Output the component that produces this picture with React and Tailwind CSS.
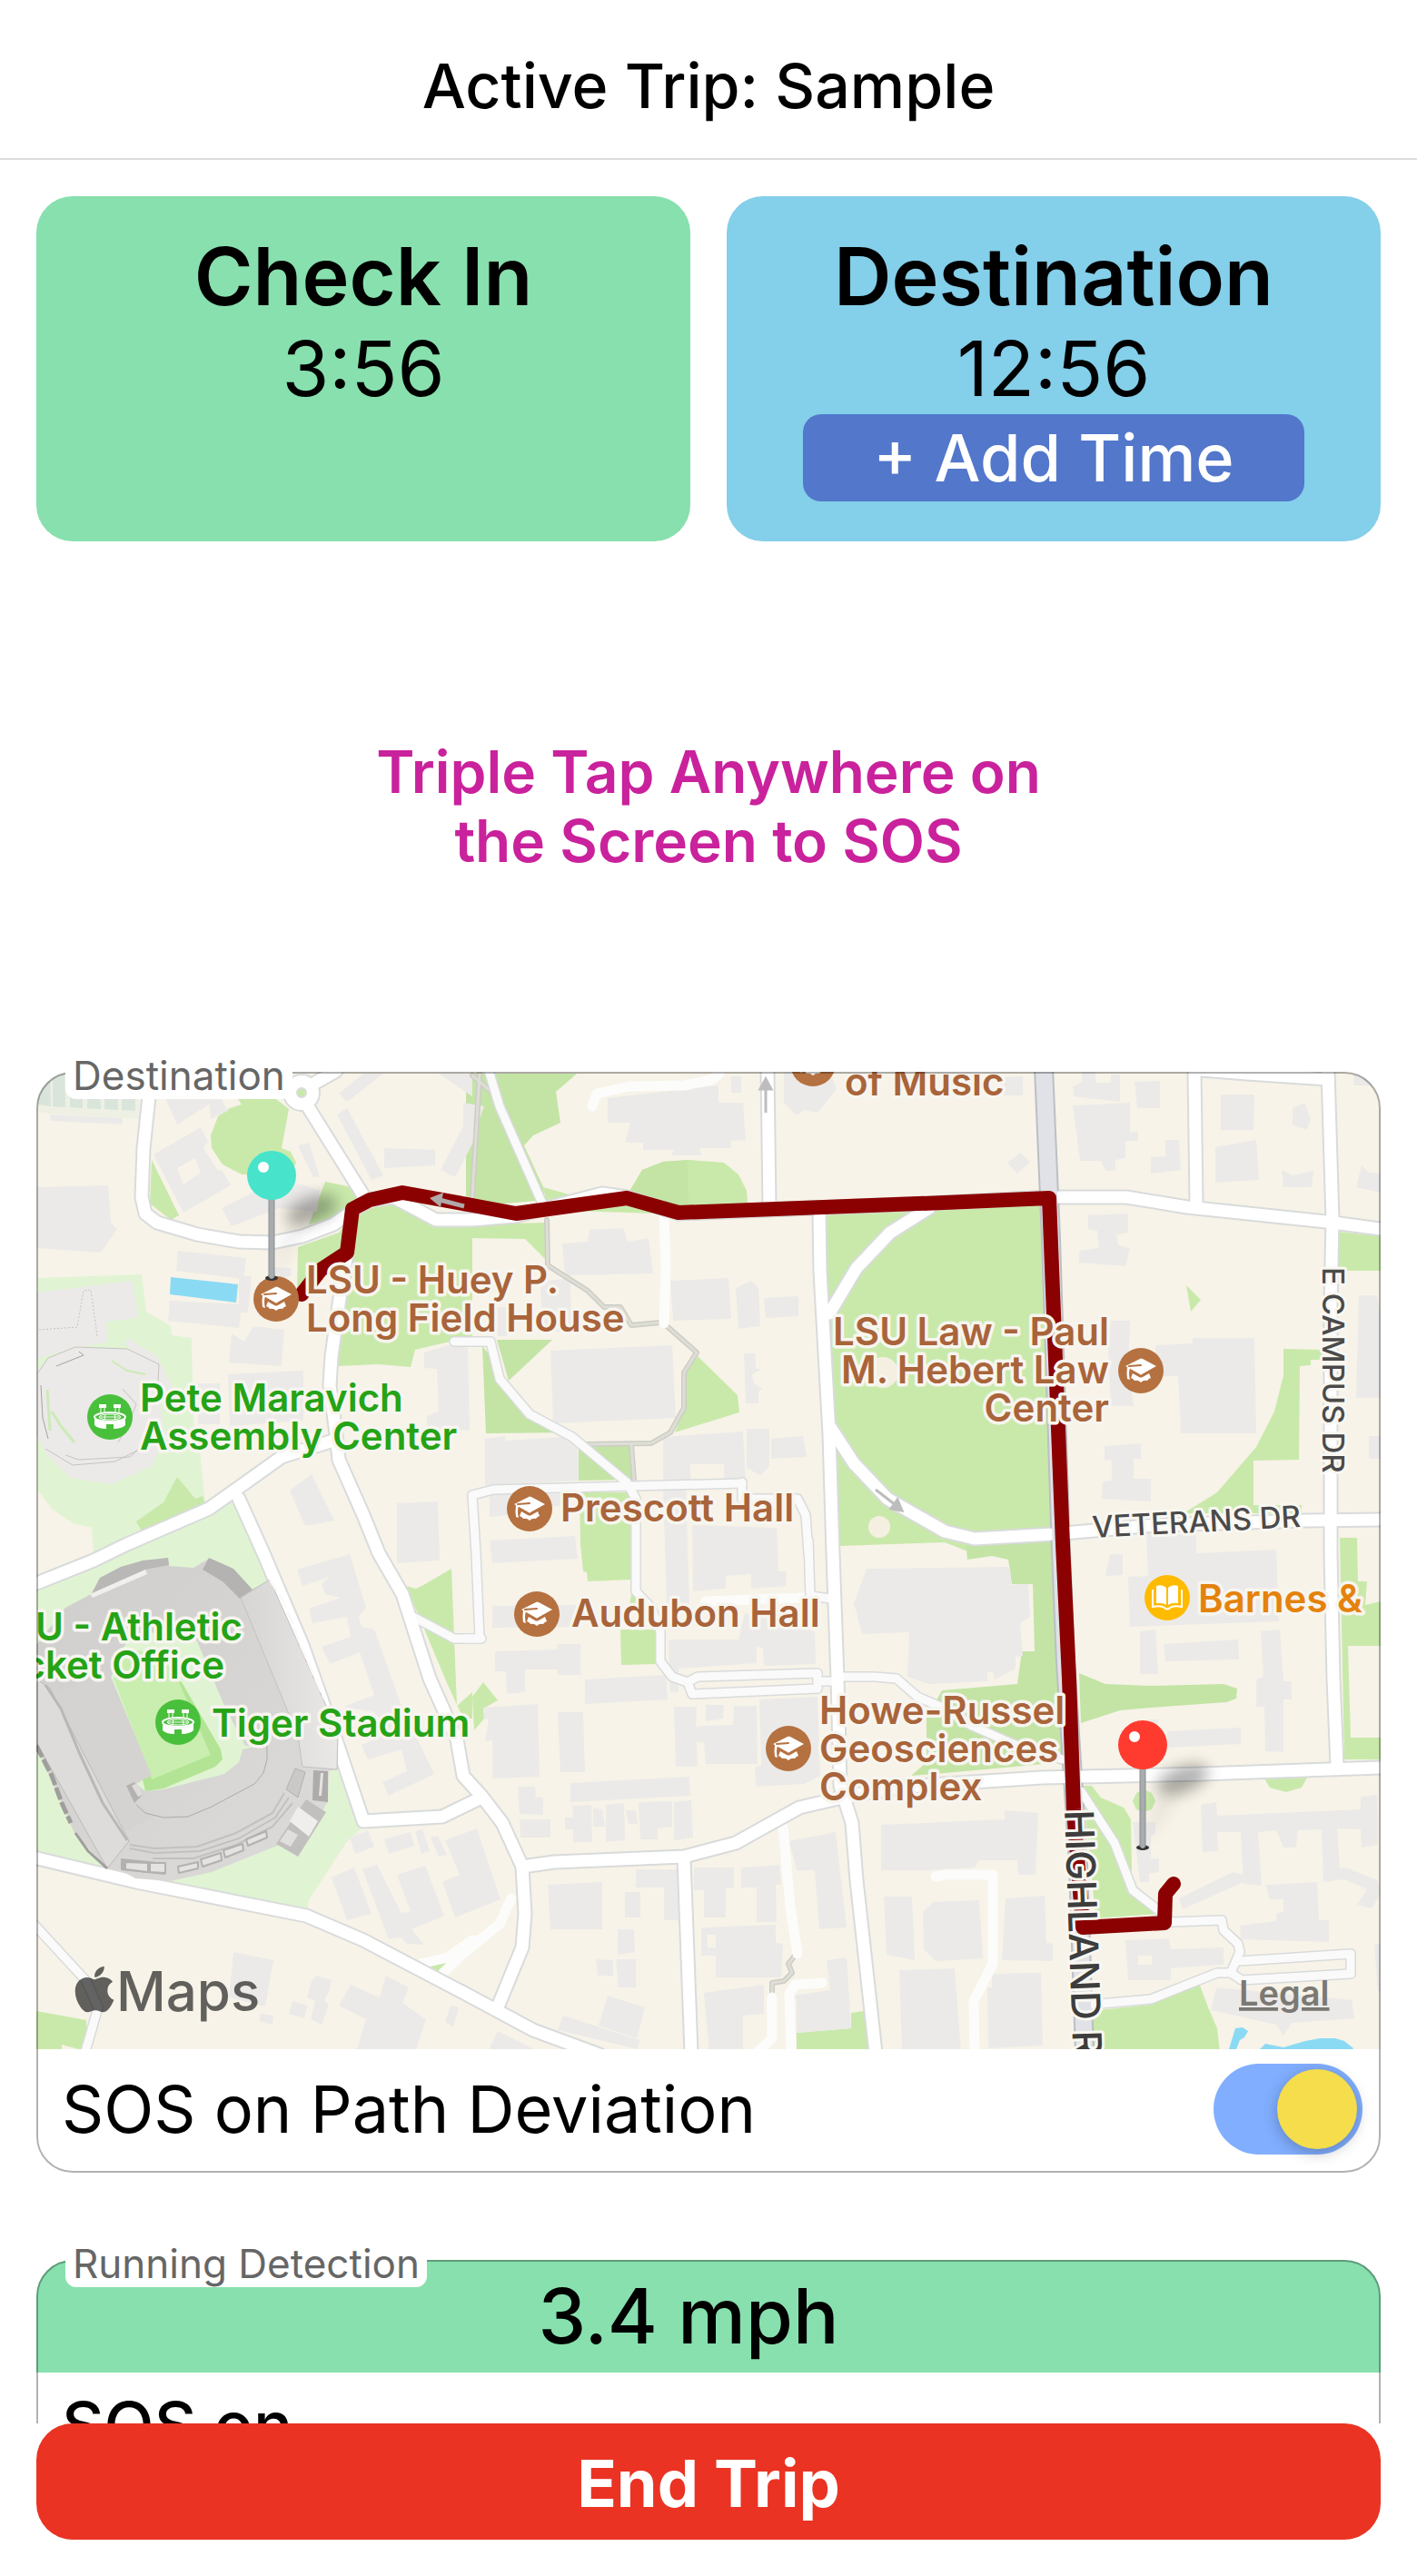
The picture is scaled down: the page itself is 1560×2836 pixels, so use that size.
import React from "react";
import { FaApple } from "react-icons/fa";

/* ---------- map geometry ---------- */

// Survey sheets: each has an origin on the map and its own scale.
const sheet = (ox, oy, sx, sy) => (s) =>
  s.split(" ").map((p) => {
    const [x, y] = p.split(",").map(Number);
    return Math.round(ox + x / sx) + "," + Math.round(oy + y / sy);
  }).join(" ");

const A = sheet(0, 1150, 3, 2.8);
const B = sheet(520, 1150, 3, 2.8);
const C = sheet(1040, 1150, 3, 2.8);
const D = sheet(0, 1700, 3, 2.7034);
const E = sheet(520, 1700, 3, 2.7034);
const F = sheet(1040, 1700, 3, 2.7034);
const join = (...parts) => parts.join(" ");

const paleGreens = [
  A("126,720 468,708 482,822 564,868 566,897 632,905 638,1170 655,1200 678,1418 450,1500 310,1568 302,1490 240,1475 170,1430 126,1375"),
  D("120,110 560,-50 780,-140 850,-10 1190,850 1150,880 1020,1060 1015,1095 120,940"),
];

const greens = [
  A("780,160 900,160 955,200 930,320 960,330 978,365 960,400 797,400 735,370 700,320 695,280 720,220 760,195 797,185"),
  A("500,355 592,525 565,540 495,490"),
  A("1075,422 1150,437 1200,480 1120,530 1020,555"),
  A("985,625 1120,580 1180,510 1330,490 1440,560 1560,560 1560,900 1370,940 1357,993 1250,985 1115,990 1160,680 1000,740 980,770"),
  A("585,1332 645,1400 670,1392 678,1418 468,1500 450,1470 540,1410"),
  B("235,440 330,465 520,450 560,385 630,360 720,355 830,365 880,400 905,450 908,490 600,520 250,510"),
  B("-20,555 250,550 245,665 175,600 -20,597"),
  B("745,960 875,1080 883,1135 670,1195 700,1120 700,1010"),
  join(B("355,1380 530,1380"), E("525,105 380,110 378,85 365,80 357,0")),
  join(B("1165,520 1500,512"), C("320,495 358,1520 70,1560 0,1535"), B("1215,1545 1190,1200")),
  C("1300,578 1440,592 1440,697 1300,697"),
  C("797,743 847,787 813,823"),
  C("1118,938 1250,940 1250,972 1210,972 1210,988 1172,990 1170,1280 1020,1282 1020,1420 1180,1420 1180,1445 790,1445 900,1380 1030,1240 1090,1130 1118,1020"),
  F("1305,-20 1362,-20 1366,110 1395,110 1390,180 1440,170 1440,303 1333,303 1340,577 1440,575 1440,640 1320,640"),
  F("455,720 485,718 515,755 590,785 615,820 617,970 600,1000 705,1100 500,1115 495,1080"),
  F("480,1390 680,1370 840,1305 870,1380 900,1440 908,1510 490,1510"),
  F("1057,697 1197,695 1180,725 1128,738 1075,725"),
  F("622,765 633,740 658,730 683,740 697,765 683,790 658,798 633,790"),
  E("0,455 37,410 83,465 37,488 40,520 5,555"),
  E("490,255 605,255 607,357 492,360"),
  E("525,150 545,150 590,200 520,180"),
  E("1072,1455 1252,1440 1252,1395 1293,1390 1312,1510 1072,1510"),
  D("1340,125 1375,133 1405,120 1492,72 1510,480 1560,440 1560,520 1530,520 1480,420"),
  D("120,1390 285,1417 290,1510 204,1490 204,1510 120,1510"),
  D("1370,1252 1480,1245 1450,1280"),
];

const deepGreens = [
  B("-20,90 345,90 275,145 290,240 200,280 170,310 235,440 240,480 -20,500"),
  B("80,910 265,910 120,1035"),
  B("33,930 60,960 100,1040 190,1130 330,1195 45,1197"),
  B("350,1240 525,1235 525,1350 500,1340 350,1345"),
  B("520,455 560,385 630,360 710,355 715,490 600,510"),
  F("70,-20 360,-20 392,650 0,680 -110,690 -60,650 -60,520 -10,435 240,415 255,320 298,318 292,120 222,120 210,45 155,35 75,45"),
  F("445,385 530,415 680,423 920,415 965,430 962,460 930,470 680,487 580,495 450,533"),
];

const waters = [
  A("564,716 786,740 780,795 560,770"),
  F("960,1440 985,1437 1003,1450 990,1468 975,1475 960,1510 935,1510"),
  F("1040,1503 1060,1487 1120,1497 1190,1480 1240,1471 1290,1470 1320,1480 1350,1500 1340,1510 1040,1510"),
];

const buildings = [
  A("545,165 690,165 690,185 585,245"), A("690,165 730,165 752,205 697,230"),
  A("508,340 662,255 688,300 672,320 720,390 732,385 762,433 605,517"),
  A("732,505 870,440 1000,430 1055,450 1048,515 920,505 765,560"),
  A("120,440 357,433 367,550 388,568 333,640 120,628"),
  A("588,636 813,657 805,722 582,697"), A("560,790 798,800 790,873 556,850"),
  A("765,890 808,915 838,868 940,880 930,990 755,980"),
  A("752,1015 1003,1005 1003,1160 760,1175"), A("655,1045 725,1045 725,1170 655,1170"),
  A("958,1375 1030,1325 1103,1468 1008,1485"), A("1311,1415 1445,1408 1452,1590 1311,1590"),
  A("983,310 1020,303 1055,410 1035,408"), A("1113,215 1147,195 1267,402 1228,417"),
  A("1270,318 1438,325 1438,372 1270,380"), A("1580,160 1580,270 1502,408 1455,385"),
  A("1120,150 1200,90 1265,90 1147,177"), A("1450,90 1560,90 1560,160"),
  A("165,215 406,228 405,247 168,235"), A("900,685 962,688 960,715 900,730"),
  A("790,710 832,715 820,825 790,825"),
  A("120,765 437,727 457,842 350,855 357,918 250,932 120,970"),
  A("120,1010 160,965 260,930 430,940 520,980 530,1130 545,1210 500,1300 370,1355 230,1335 150,1260 120,1200"),
  A("420,905 520,960 575,1070 540,1090 480,980 415,925"),
  A("1402,950 1480,927 1545,935 1552,1190 1410,1180 1410,1145 1448,1130 1442,1000 1402,998"),
  B("448,165 812,125 812,178 895,178 903,295 855,298 855,318 750,318 755,342 657,342 665,325 565,325 565,302 505,302 522,240 448,240"),
  B("855,98 888,98 888,147 855,147"), B("1028,85 1180,85 1203,138 1140,210 1095,202 1070,217 1028,178"),
  B("298,612 382,608 388,572 498,565 513,608 583,595 597,705 305,710"),
  B("655,728 845,720 855,845 663,852"), B("870,750 920,727 945,750 952,868 880,875"),
  B("963,780 1078,775 1078,836 970,842"), B("257,943 660,928 672,1150 267,1168"),
  B("897,952 937,952 937,1000 958,1000 925,1015 930,1045 958,1060 945,1070 945,1105 903,1105"),
  B("905,1183 980,1183 980,1300 950,1328 905,1305"), B("988,1215 1093,1207 1103,1270 988,1276"),
  B("630,1210 895,1193 903,1345 830,1345 830,1293 720,1293 720,1345 630,1345"),
  B("42,1215 108,1208 110,1222 348,1208 350,1345 42,1358"), B("57,1385 300,1385 300,1420 115,1450 57,1455"),
  B("-30,180 38,190 0,290 -30,310"), B("225,730 325,720 328,890 232,880"), B("85,810 115,810 115,900 85,900"),
  join(B("57,1530 340,1515"), E("348,43 65,57")),
  join(B("630,1370 705,1365"), E("717,180 642,180")),
  join(B("725,1480 1005,1490"), E("1012,80 1037,82 1035,125 920,133 920,90 838,95 838,133 730,140")),
  C("422,130 453,115 453,85 498,85 498,117 550,117 550,92 580,92 580,177 425,160"),
  C("628,115 712,113 712,195 637,195"),
  C("422,187 612,178 612,270 638,270 638,296 598,296 598,350 563,355 563,388 530,388 515,357 447,357"),
  C("728,293 773,293 780,387 680,397 680,348 728,345"), C("912,153 1022,153 1020,264 912,264"),
  C("895,317 1030,295 1038,418 895,426"), C("1150,195 1187,178 1210,230 1193,263 1150,245"),
  C("1112,387 1150,403 1218,388 1213,440 1120,440"), C("1377,372 1400,395 1440,397 1440,455 1360,440"),
  C("1350,92 1440,92 1440,125 1350,125"), C("207,365 250,333 282,362 240,397"), C("195,100 257,98 257,158 195,158"),
  C("473,527 605,520 607,580 568,585 572,620 612,628 598,682 443,673 445,635 510,627 505,573 473,567"),
  C("550,850 613,850 607,1000 623,1113 548,1113 540,950"),
  C("697,928 820,920 820,905 1022,905 1030,1197 780,1197 772,1023 697,1023"),
  C("528,1238 648,1230 648,1276 623,1276 623,1338 680,1338 680,1407 520,1400 523,1347 553,1345 553,1282 528,1280"),
  C("1367,773 1427,773 1440,830 1440,1090 1360,1088"), C("1400,1207 1440,1207 1440,1276 1400,1276"),
  F("665,-35 830,-28 832,27 1095,15 1103,230 613,245 605,97 672,95"),
  F("-258,73 215,67 220,122 277,118 282,215 250,235 257,333 233,335 233,370 165,403 160,378 142,380 140,408 -50,415 -123,395 -117,262 -273,268 -300,175"),
  F("545,30 588,30 588,92 530,95"), F("645,260 697,255 705,387 645,387"), F("722,297 970,283 972,342 730,348"),
  F("1045,260 1107,255 1120,407 1147,407 1145,462 1118,462 1120,618 1060,617 1055,485 1028,483 1028,403 1052,395"),
  F("735,558 978,545 978,595 735,605"), F("675,522 705,522 705,550 675,550"),
  F("622,828 697,828 697,862 680,870 680,935 707,935 707,975 675,980 675,1005 645,1005"),
  F("845,775 897,768 900,808 1375,790 1375,752 1427,745 1430,895 1378,902 1375,850 1297,845 1305,965 1325,962 1427,1000 1440,1040 1410,1085 1363,1072 1395,1028 1320,997 1252,1005 1245,850 1168,852 1160,902 1120,902 1095,852 1035,858 1047,1017 987,1010 978,857 900,857 902,915 852,917"),
  F("773,1055 950,977 990,983 987,1005 787,1087"),
  F("1062,1015 1230,1007 1235,1118 1270,1120 1268,1185 978,1175 975,1135 1095,1122 1095,1097 1120,1095 1118,1057 1070,1057"),
  F("597,1180 740,1172 748,1207 922,1200 920,1253 748,1262 747,1298 605,1298"),
  F("897,1320 1345,1357 1352,1410 1145,1425 1120,1462 1095,1430 880,1387"),
  F("-210,835 198,820 198,793 308,800 300,985 242,985 240,940 115,940 100,962 -60,970 -210,970"),
  F("200,1053 330,1045 335,1187 357,1190 357,1240 190,1238"), F("-73,1095 -35,1065 115,1060 125,1233 -30,1240 -70,1205"),
  F("-150,1268 33,1262 55,1510 -142,1510"), F("157,1280 317,1277 323,1492 145,1500 142,1320 157,1318"),
  F("1420,1193 1440,1190 1440,1330 1430,1330"),
  E("67,185 345,180 345,245 67,250"),
  E("75,320 280,313 282,297 357,297 357,388 282,388 282,372 173,372 173,440 115,445 110,378 75,378"),
  E("373,403 640,388 645,462 373,475"),
  E("648,285 880,283 900,205 1130,260 1135,357 963,363 960,310 940,302 938,355 682,370 680,440 655,440"),
  E("35,487 215,477 223,692 65,698 65,585 42,587 55,522 40,520"), E("282,500 367,500 373,678 290,678"),
  E("665,483 740,483 738,543 768,540 862,537 865,480 938,480 943,655 770,655 765,588 742,590 743,662 672,663"),
  E("772,478 830,478 828,520 772,527"), E("947,462 1140,455 1150,690 1095,713 937,722 933,663 955,660"),
  E("325,710 717,693 720,750 325,767"), E("150,723 208,723 210,753 233,753 233,805 157,803"),
  E("157,820 257,820 257,873 160,873"), E("307,815 332,815 330,778 392,777 397,887 333,887 332,850 307,848"),
  E("398,785 430,790 437,840 400,840"), E("440,775 500,770 505,880 440,887"), E("508,792 540,792 547,833 515,833"),
  E("550,767 660,765 660,840 612,845 612,878 555,878"), E("665,767 722,763 728,873 665,880"),
  E("540,968 680,968 680,1118 632,1118 632,1022 540,1022"),
  E("732,962 863,962 863,1022 838,1025 838,1110 765,1110 765,1030 732,1030"),
  E("888,962 1015,955 1020,1013 1003,1015 1005,1125 938,1125 938,1023 888,1023"),
  E("250,1013 430,1007 430,1147 257,1147"), E("505,1035 555,1035 555,1110 505,1110"),
  E("480,1147 533,1147 537,1215 480,1222"), E("408,1235 465,1237 465,1283 415,1283"),
  E("473,1235 540,1235 540,1320 482,1320"),
  E("757,1140 1003,1133 1003,1187 1027,1190 1020,1290 805,1290 805,1225 757,1225"),
  E("1047,885 1200,858 1235,1140 1145,1147 1130,970 1070,970"),
  E("1170,1237 1235,1230 1252,1440 1072,1455 1072,1355 1057,1343 1183,1328"),
  E("765,1335 963,1312 963,1397 895,1403 895,1510 782,1510"),
  E("447,1343 570,1380 543,1470 417,1433"), E("300,1402 553,1475 545,1503 283,1445"), E("83,1450 220,1510 50,1510"),
  D("1470,880 1575,845 1652,1057 1503,1110 1460,1005 1517,985"),
  E("1360,1050 1452,1050 1460,1238 1367,1222"),
  D("980,75 1155,30 1210,190 1185,215 1193,245 1237,253 1325,480 1433,685 1285,750 1262,708 1345,675 1325,612 1215,640 1195,597 1290,560 1235,500 1135,485 1235,448 1187,322 1088,357 1063,305 1158,277 1145,217 1033,235 1020,193 1125,160 1075,150 1063,118 1090,98 1000,125"),
  D("1155,872 1215,852 1237,900 1172,922"), D("1270,878 1355,858 1367,897 1283,923"),
  D("1370,855 1395,848 1418,913 1393,922"), D("1422,873 1447,868 1475,925 1450,930"),
  D("1095,993 1170,963 1227,1100 1145,1118"),
  D("1197,968 1245,955 1327,1097 1355,1092 1312,985 1403,958 1468,1105 1360,1147 1400,1192 1345,1190 1325,1170 1285,1177"),
  D("770,1215 903,1237 875,1375 755,1350"),
  D("1045,1283 1095,1297 1085,1330 1070,1357 1087,1370 1063,1430 1025,1415 1040,1360 1015,1350 1030,1300"),
  D("967,1360 1018,1373 1005,1412 953,1397"), D("862,1397 903,1402 900,1430 855,1420"),
  D("1157,1312 1253,1350 1275,1285 1350,1318 1330,1365 1407,1415 1370,1510 1175,1510 1210,1415 1120,1372"),
  D("1487,1372 1515,1380 1497,1437 1470,1422"), D("1311,-30 1450,-30 1453,50 1311,57"),
];

const courtyards = [
  A("585,380 645,350 662,395 605,430"),
  E("773,1163 803,1163 803,1200 778,1200"),
  F("638,1225 683,1225 683,1253 638,1253"),
];

const footpaths = [
  A("1560,470 1585,90"), B("0,95 70,150"),
  B("245,540 250,680 380,760 435,810 490,810 525,865 620,858"),
  B("640,865 740,950 698,1010 700,1120 655,1195 590,1228 375,1232"),
  B("525,1235 533,1345"),
  E("1065,1225 1045,1250 1055,1275 1030,1300 990,1305 990,1345"),
];

const lanes = [
  B("395,190 410,150 520,130 700,125 790,110 815,90"), B("633,530 640,680 632,860"),
  E("1025,840 1050,1080 1075,1220"), E("990,1350 990,1470 940,1515"),
  E("1155,1305 1065,1310 1048,1340 1052,1510"), D("1530,1220 1650,1130 1688,1055"),
  E("770,170 1100,160"), F("-30,990 0,985 160,985 160,1250 95,1360 100,1510"),
  D("1390,1250 1480,1230 1560,1180"), D("1460,1280 1575,1180"),
];

const minorRoads = [
  B("50,70 90,190 230,490"),
  join(B("-60,915 60,915 90,1030 190,1140 330,1210 510,1350 540,1400 540,1568"), E("540,140 590,190 620,260 622,350 660,395 710,412 745,395 1140,385 1140,430 725,445 710,412")),
  B("890,1350 890,1400 1075,1400 1100,1450 1110,1568"),
  join(B("890,1352 70,1372 0,1390 12,1568"), E("25,280 -30,280")),
  E("1110,-10 1115,155 1185,162"), E("1140,408 1200,408"),
  D("110,1130 285,1300 325,1380 280,1520"), D("1365,215 1500,282 1590,282"),
  join(E("1205,395 1330,395 1400,400 1470,455 1560,490"), F("90,540 240,600 390,640")),
  F("450,735 490,790 560,890 620,1030 705,1090 750,1125 915,1118 920,1150 970,1190 975,1215 945,1275 900,1275 830,1300 680,1355 480,1370"),
  F("975,1240 1340,1220 1340,1280 980,1297 945,1275"),
];

const roads = [
  join(A("500,80 475,320 468,470 480,520 520,550 650,585 790,608 900,610 1000,590 1100,555 1170,510 1220,480 1300,470 1440,540"), B("0,540 140,530 430,460 510,470 680,520 1500,490"), C("350,470 600,470 800,500 1260,545 1440,568")),
  A("990,150 1210,480"), A("1110,80 1000,140"),
  join(A("1145,640 1120,800 1095,960 1090,1050 1110,1200 1120,1280 1200,1450 1250,1568"), D("1330,150 1420,400 1510,580 1530,690 1590,750"), E("100,830 165,960 175,1100 165,1200 80,1385")),
  join(D("100,125 310,50"), A("420,1540 690,1430 930,1270 1100,1220")),
  join(A("790,1400 870,1568"), D("1000,300 1100,560 1200,825 1460,810 1590,755")),
  join(D("100,930 450,1005 1010,1105 1200,1180 1560,1350"), E("200,1445 420,1520")),
  B("975,80 982,500"),
  join(B("1147,520 1150,700 1180,1200 1190,1568"), E("1205,400 1215,720 1255,830 1270,1000 1332,1515")),
  B("1510,505 1380,580 1270,690 1180,830"),
  join(B("1182,1180 1260,1290 1370,1400 1560,1500"), C("100,1522 360,1510 700,1480 1200,1468 1440,1465")),
  C("825,80 832,490"), C("850,78 1000,90 1265,105"),
  join(C("1265,80 1280,540 1275,800 1275,1568"), F("1285,400 1297,660")),
  join(E("165,960 270,945 700,930 870,890 1080,785 1220,755 1400,725"), F("0,715 320,695 850,685 1270,670 1440,665")),
  E("700,935 722,1515"),
];

const highland = join(C("327,70 350,600 385,1568"), F("400,350 440,950 462,1515"));
const route = join(
  A("995,770 1060,695 1145,640 1165,508 1220,478 1330,457"), B("0,495 145,520 510,473 680,517"),
  C("0,488 345,473"), F("390,0 410,400 425,790 455,1142 727,1127 730,1040 757,1010"),
);

const Fill = ({ items, color }) => items.map((p, i) => <polygon key={i} points={p} fill={color} />);
const Line = ({ items, color, w }) => items.map((p, i) => (
  <polyline key={i} points={p} fill="none" stroke={color} strokeWidth={w} strokeLinejoin="round" strokeLinecap="round" />
));

function Stadium() {
  return (
    <g strokeLinejoin="round">
      <defs>
        <linearGradient id="bowl" x1="0" y1="0" x2="1" y2="1">
          <stop offset="0" stopColor="#cfcecc" /><stop offset="1" stopColor="#dcdbd9" />
        </linearGradient>
        <linearGradient id="stand" x1="0" y1="0" x2="1" y2="0">
          <stop offset="0" stopColor="#d6d5d3" /><stop offset="1" stopColor="#e9e8e6" />
        </linearGradient>
      </defs>
      <polygon points={D("330,100 470,55 555,40 558,65 640,70 690,42 770,75 830,135 890,105 1115,560 1115,670 1085,675 1083,768 1060,800 985,900 915,897 700,975 560,1003 447,995 398,970 350,965 247,860 120,600 120,300 215,190 300,150")} fill="url(#bowl)" />
      <polygon points={D("330,100 400,68 470,48 555,40 558,63 480,75 300,155")} fill="#b9b8b6" />
      <polygon points={D("298,150 480,75 485,88 305,160")} fill="#f0efed" />
      <polygon points={D("690,40 770,72 833,135 793,162 735,110 668,75")} fill="#b4b3b1" />
      <polygon points={D("365,400 400,320 440,265 600,262 650,290 740,480 810,600 850,600 800,612 790,650 740,685 540,730 480,735 450,715 495,690")} fill="#e0f4d3" />
      <polygon points={D("480,380 600,410 730,610 735,640 710,662 540,728 480,735 470,700")} fill="#b3e495" />
      <polygon points={D("375,400 400,310 580,330 590,410 695,628 500,700")} fill="#caeeb0" />
      <polygon points={D("160,440 370,400 500,690 420,720 450,770 510,810 400,860")} fill="#d4d3d1" />
      <polygon points={D("120,400 165,430 425,885 355,965 120,590")} fill="#dddcda" stroke="#bcbab8" strokeWidth="1" />
      <polygon points={D("795,160 890,105 1115,560 1112,670 1000,662 985,570")} fill="url(#stand)" stroke="#c4c2c0" strokeWidth="1" />
      <polyline points={D("890,105 935,170 965,235 990,295 1018,350 1045,405 1070,460")} fill="none" stroke="#fafafa" strokeWidth="3" strokeDasharray="16 4" />
      <polygon points={D("418,720 445,708 472,745 445,770")} fill="#b4b2b0" />
      <polygon points={D("436,718 452,710 472,745 455,752")} fill="#dddcda" />
      <polyline points={D("450,775 480,800 540,815 620,810 700,780 840,715 870,680 882,640 882,598")} fill="none" stroke="#adaba9" strokeWidth="1" />
      <polyline points={D("150,420 200,490 260,620 340,770 420,880")} fill="none" stroke="#bab8b6" strokeWidth="3" />
      <polyline points={D("120,600 170,690 205,770 235,830")} fill="none" stroke="#a09e9c" strokeWidth="5" strokeDasharray="14 3" />
      <polyline points={D("250,860 290,915 355,965")} fill="none" stroke="#a09e9c" strokeWidth="3" />
      {["430,895 510,905 650,900 780,860 900,800 940,740", "430,905 510,918 660,915 790,875 910,815 955,755", "505,935 640,935 780,895 900,840 965,770"].map((p) => (
        <polyline key={p} points={D(p)} fill="none" stroke="#c3c1bf" strokeWidth="2" />
      ))}
      <polygon points={D("975,668 1008,678 985,755 945,730")} fill="#cbc9c7" stroke="#b3b1af" strokeWidth="1" />
      <polygon points={D("1035,673 1083,675 1083,768 1032,762")} fill="#aeacaa" />
      <polygon points={D("1058,680 1068,680 1062,750 1052,750")} fill="#e5e4e2" />
      <polygon points={D("1010,760 1078,797 985,930 912,893")} fill="#c2c0be" />
      <polygon points={D("985,780 1050,825 1020,870 957,825")} fill="#efeeec" />
      <polygon points={D("950,850 985,865 960,900 925,885")} fill="#e0dfdd" />
      <polygon points={D("400,935 548,948 546,983 398,970")} fill="#b3b1af" />
      {["415,945 490,950 490,975 415,968", "495,948 547,950 545,978 495,975", "587,960 655,945 655,965 592,978", "663,938 728,918 732,940 670,960", "738,910 800,892 805,912 745,932", "812,878 880,855 883,872 818,898"].map((p) => (
        <polygon key={p} points={D(p)} fill="#e4e3e1" stroke="#b3b1af" strokeWidth="2" />
      ))}
    </g>
  );
}

function Arena() {
  return (
    <g fill="none" stroke="#c6c4c2" strokeWidth="1">
      <polyline points={A("126,1010 160,965 250,932 420,937 525,985 520,1100")} />
      <polyline points={A("185,990 275,958 262,945")} stroke="#a5a3a1" />
      <polyline points={A("135,1050 140,1150 160,1215")} stroke="#a5a3a1" />
      <polyline points={A("150,1245 240,1297 380,1285 500,1230")} />
      <polyline points={A("215,1265 260,1280 430,1270 490,1220")} />
      <polyline points={A("170,1130 200,1175 245,1225")} stroke="#cdeab8" strokeWidth="3" />
      <polyline points={A("370,975 420,1005 480,1015")} stroke="#cdeab8" strokeWidth="2" />
      <polyline points={A("405,1060 450,1110 420,1180 390,1225")} />
      <polyline points={A("155,1065 165,1190")} stroke="#cdeab8" strokeWidth="3" />
      <polyline points={A("130,880 255,870 275,760 300,755 320,900")} strokeDasharray="2 2" />
    </g>
  );
}

/* ---------- place markers ---------- */

function CapIcon({ x, y }) {
  return (
    <g transform={`translate(${x} ${y})`}>
      <circle r="25" fill="#b57140" />
      <path d="M-17 -5 L-1 -13 Q0 -14 2 -13 L17 -5 L1 4 Q0 5 -1 4 Z" fill="#fff" />
      <path d="M0 -6 L-13 -5" stroke="#b57140" strokeWidth="2" strokeLinecap="round" />
      <path d="M-15 -4 Q-16 3 -15 9 L-12 10 Q-14 3 -12 -3 Z" fill="#fff" />
      <path d="M-9 3 L-2 7 Q0 8 2 7 L9 3 L11 8 Q8 9 7 11 Q3 10 0 13 Q-3 10 -7 11 Q-8 9 -11 8 Z" fill="#fff" />
    </g>
  );
}

function StadiumIcon({ x, y }) {
  return (
    <g transform={`translate(${x} ${y})`}>
      <circle r="25" fill="#49c03b" />
      <path d="M-12 -14h8v4h-8z M4 -14h8v4h-8z" fill="#fff" />
      <path d="M-10 -10v5 M-6 -10v5 M6 -10v5 M10 -10v5" stroke="#fff" strokeWidth="1" />
      <ellipse cy="0" rx="17" ry="5" fill="none" stroke="#fff" strokeWidth="2" />
      <ellipse cy="0" rx="12" ry="3" fill="none" stroke="#fff" strokeWidth="1" />
      <path d="M-5 -3 L-6 3 M5 -3 L6 3 M-11 0 H11" stroke="#fff" strokeWidth="1" />
      <path d="M-17 2 Q-9 6 0 6 Q9 6 17 2 V9 Q13 13 4 13 V8 H-4 V13 Q-13 13 -17 9 Z" fill="#fff" />
    </g>
  );
}

function BookIcon({ x, y }) {
  return (
    <g transform={`translate(${x} ${y})`} fill="#fff">
      <circle r="25" fill="#ffbb00" />
      <path d="M-1 -11 Q-5 -15 -12 -13 V6 Q-5 5 -1 8 Z M1 -11 Q5 -15 12 -13 V6 Q5 5 1 8 Z" />
      <path d="M-16 -9 V10 Q-7 8 -3 11 Q0 14 3 11 Q7 8 16 10 V-9" fill="none" stroke="#fff" strokeWidth="2" />
    </g>
  );
}

function Pin({ x, y, color }) {
  return (
    <g transform={`translate(${x} ${y})`}>
      <ellipse cx="44" cy="38" rx="30" ry="14" fill="#000" opacity="0.3" filter="url(#soft)" transform="rotate(-20 44 38)" />
      <path d="M2 112 L14 60 L50 40 L24 80 Z" fill="#000" opacity="0.06" filter="url(#soft)" />
      <ellipse cy="113" rx="7" ry="3" fill="#333" />
      <path d="M-3 20 V112 Q0 116 3 112 V20 Z" fill="#a8acae" />
      <path d="M-3 24 V112 M3 24 V112" stroke="#8b8f91" strokeWidth="1" />
      <circle r="27" fill={color} />
      <circle cx="-9" cy="-9" r="6" fill="#fff" />
    </g>
  );
}

function Label({ x, y, lines, color, anchor = "start" }) {
  return (
    <text x={x} y={y} textAnchor={anchor} fill={color} stroke="#f7f5ef" strokeWidth="7" strokeLinejoin="round" paintOrder="stroke" className="text-[42px] font-semibold">
      {lines.map((l, i) => <tspan key={l} x={x} y={y + i * 42}>{l}</tspan>)}
    </text>
  );
}

const BROWN = "#a9643a";
const GREEN = "#25a316";

function TripMap() {
  return (
    <svg viewBox="40 1180 1480 1076" className="block w-full" role="img" aria-label="Route map">
      <defs><filter id="soft" x="-50%" y="-100%" width="200%" height="300%"><feGaussianBlur stdDeviation="8" /></filter></defs>
      <rect x="40" y="1180" width="1480" height="1076" fill="#f7f3e8" />
      <polygon points={A("120,80 465,80 460,230 120,210")} fill="#eef0e4" />
      {[126, 175, 232, 290, 348, 405].map((x, i) => (
        <polygon key={x} points={A(`${x},85 ${x + 38},85 ${x + 42},${190 + i * 3} ${x - 2},${186 + i * 3}`)} fill="#d9e4da" />
      ))}
      <Fill items={paleGreens} color="#e0f4d3" />
      <Fill items={greens} color="#c9e9ab" />
      <Fill items={deepGreens} color="#c3e4a5" />
      <Fill items={waters} color="#8bdaf4" />
      <circle cx="968" cy="1681" r="12" fill="#f5efe2" />
      <circle cx="972" cy="1511" r="17" fill="#f5efe2" />
      <Fill items={buildings} color="#ebeae8" />
      <Fill items={courtyards} color="#f7f3e8" />
      <Arena />
      <Line items={footpaths} color="#cccdc5" w={6} />
      <Line items={footpaths} color="#deded6" w={3} />
      <Line items={lanes} color="#fcfcfb" w={11} />
      <Line items={roads} color="#d9dbdb" w={17} />
      <Line items={minorRoads} color="#d9dbdb" w={12} />
      <circle cx="332" cy="1203" r="20" fill="#fff" stroke="#d9dbdb" strokeWidth="2" />
      <Line items={[highland]} color="#bcbfc4" w={22} />
      <Line items={minorRoads} color="#fafafa" w={9} />
      <Line items={roads} color="#ffffff" w={13} />
      <circle cx="332" cy="1203" r="5" fill="#c9e9ab" stroke="#d9dbdb" strokeWidth="2" />
      <Line items={[highland]} color="#e0e2e7" w={18} />
      <Stadium />
      <g stroke="#bdbdbd" strokeWidth="4" fill="none">
        <path d="M843 1225 V1194 M837 1199 L843 1188 L849 1199 Z" fill="#bdbdbd" strokeWidth="3" />
        <path d="M964 1640 L986 1657 M981 1661 L993 1663 L988 1651 Z" fill="#bdbdbd" strokeWidth="3" />
      </g>
      <Line items={[route]} color="#8b0000" w={16} />
      <path d="M511 1328 L484 1321" stroke="#b0a9a9" strokeWidth="5" />
      <path d="M473 1319 L488 1313 L485 1329 Z" fill="#b0a9a9" />

      <CapIcon x={304} y={1430} />
      <CapIcon x={583} y={1661} />
      <CapIcon x={591} y={1777} />
      <CapIcon x={1256} y={1509} />
      <CapIcon x={868} y={1925} />
      <CapIcon x={895} y={1171} />
      <StadiumIcon x={121} y={1560} />
      <StadiumIcon x={196} y={1896} />
      <BookIcon x={1285} y={1759} />

      <Label x={337} y={1424} color={BROWN} lines={["LSU - Huey P.", "Long Field House"]} />
      <Label x={617} y={1675} color={BROWN} lines={["Prescott Hall"]} />
      <Label x={629} y={1791} color={BROWN} lines={["Audubon Hall"]} />
      <Label x={1221} y={1481} color={BROWN} anchor="end" lines={["LSU Law - Paul", "M. Hebert Law", "Center"]} />
      <Label x={902} y={1898} color={BROWN} lines={["Howe-Russel", "Geosciences", "Complex"]} />
      <Label x={930} y={1206} color={BROWN} lines={["of Music"]} />
      <Label x={154} y={1554} color={GREEN} lines={["Pete Maravich", "Assembly Center"]} />
      <Label x={267} y={1806} color={GREEN} anchor="end" lines={["LSU - Athletic"]} />
      <Label x={247} y={1848} color={GREEN} anchor="end" lines={["Ticket Office"]} />
      <Label x={233} y={1912} color={GREEN} lines={["Tiger Stadium"]} />
      <Label x={1319} y={1775} color="#e4820c" lines={["Barnes &"]} />

      <g fill="#4a4a4a" stroke="#f9f7f1" strokeLinejoin="round" strokeWidth="6" paintOrder="stroke">
        <text transform="translate(1203 1693) rotate(-3)" className="text-[33px] font-medium">VETERANS DR</text>
        <text transform="translate(1456 1395) rotate(90)" className="text-[33px] font-medium">E CAMPUS DR</text>
        <text transform="translate(1172 1993) rotate(88)" fill="#3d3d3d" className="text-[44px] font-medium">HIGHLAND RD</text>
      </g>

      <Pin x={299} y={1294} color="#47e4cb" />
      <Pin x={1258} y={1921} color="#ff3b30" />

      <g fill="#000" opacity="0.6">
        <FaApple x="75" y="2161" size="58" color="#000" />
        <text x="128" y="2214" className="text-[60px] font-medium">Maps</text>
      </g>
      <a href="#legal">
        <text x="1364" y="2208" fill="#7b7974" className="text-[38px] font-semibold underline decoration-4 underline-offset-4">Legal</text>
      </a>
    </svg>
  );
}

/* ---------- screen ---------- */

function Panel({ title, children }) {
  return (
    <section className="relative after:pointer-events-none after:absolute after:inset-0 after:rounded-[40px] after:border-2 after:border-black/30">
      <div className="overflow-hidden rounded-[40px]">{children}</div>
      <h2 className="absolute -top-5 left-8 z-10 rounded-b-xl bg-white px-2 pb-0.5 text-[44px] leading-12 text-[#666]">{title}</h2>
    </section>
  );
}

export default function App() {
  return (
    <div className="flex h-screen flex-col bg-white font-['Inter',sans-serif] text-black">
      <header className="border-b-2 border-[#dcdcdc] px-10 pt-[54px] pb-10 text-center">
        <h1 className="text-[68px] leading-20 font-medium">Active Trip: Sample</h1>
      </header>

      <main className="min-h-0 flex-1 overflow-hidden px-10 pt-10">
        <div className="grid grid-cols-2 gap-10 text-center">
          <section className="rounded-[40px] bg-[#87e0ae] pt-9 pb-11">
            <h2 className="text-[88px] leading-26 font-semibold">Check In</h2>
            <p className="text-[84px] leading-25">3:56</p>
          </section>
          <section className="rounded-[40px] bg-[#84cfe9] pt-9 pb-11">
            <h2 className="text-[88px] leading-26 font-semibold">Destination</h2>
            <p className="text-[84px] leading-25">12:56</p>
            <button className="h-24 w-[552px] max-w-full rounded-[20px] bg-[#5277cb] text-[72px] leading-23 font-medium text-white">+ Add Time</button>
          </section>
        </div>

        <p className="my-54 text-center text-[64px] leading-19 font-semibold text-[#c9229c]">
          Triple Tap Anywhere on<br />the Screen to SOS
        </p>

        <Panel title="Destination">
          <TripMap />
          <div className="flex items-center justify-between pt-4 pr-5 pb-5 pl-7">
            <label htmlFor="deviation" className="text-[72px] leading-25">SOS on Path Deviation</label>
            <input
              id="deviation"
              type="checkbox"
              defaultChecked
              className="flex h-25 w-41 shrink-0 appearance-none items-center rounded-full bg-[#81aeff] px-1.5 before:size-22 before:rounded-full before:bg-[#f5dd4b] before:shadow-[0_4px_16px_rgba(0,0,0,0.25)] checked:justify-end"
            />
          </div>
        </Panel>

        <div className="mt-24">
          <Panel title="Running Detection">
            <p className="bg-[#87e0ae] py-3 pr-11 text-center text-[84px] leading-25 font-medium">3.4 mph</p>
            <p className="pt-4 pb-25 pl-7 text-[72px] leading-21 font-medium">SOS on</p>
          </Panel>
        </div>
      </main>

      <footer className="px-10 pb-10">
        <button className="h-32 w-full rounded-[40px] bg-[#ea3323] pt-1 text-[72px] font-bold text-white">End Trip</button>
      </footer>
    </div>
  );
}
